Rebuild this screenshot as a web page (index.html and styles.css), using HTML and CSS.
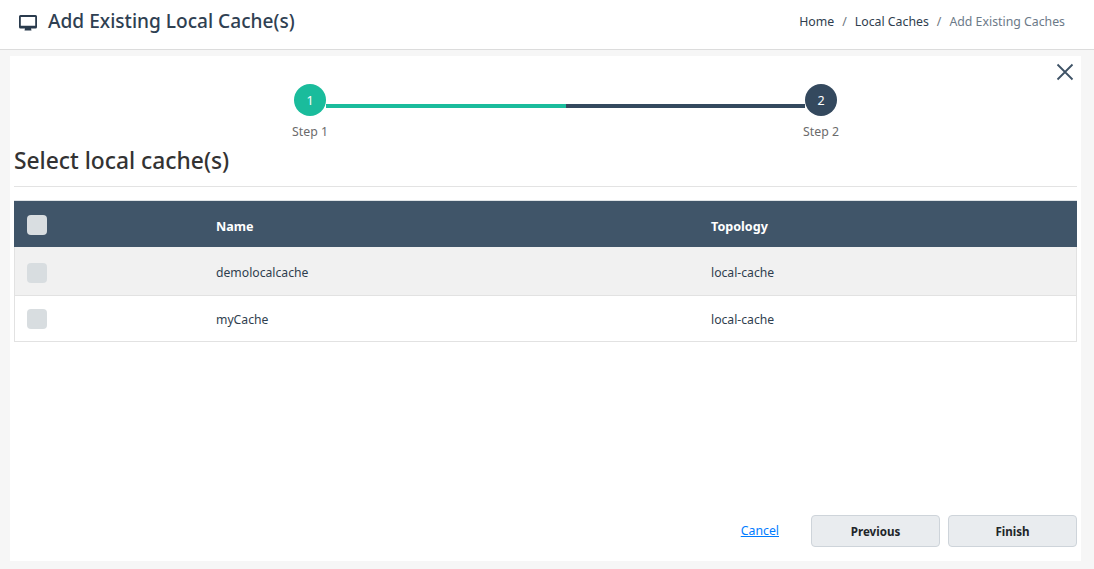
FILE: index.html
```html
<!DOCTYPE html>
<html lang="en">
<head>
<meta charset="utf-8">
<title>Add Existing Local Cache(s)</title>
<link rel="stylesheet" href="styles.css">
</head>
<body>
<header class="topbar">
  <div class="title">
    <svg class="title-icon" viewBox="0 0 18 16" width="18" height="16" aria-hidden="true">
      <path fill="#2a3b4d" fill-rule="evenodd" d="M1.500 0h15a1.500 1.500 0 0 1 1.500 1.500v10.500a1.500 1.500 0 0 1-1.500 1.500h-4.500l.5 2h-7l.5-2h-4.500a1.500 1.500 0 0 1-1.500-1.500v-10.500a1.500 1.500 0 0 1 1.500-1.500zM1.800 2v8.800h14.400v-8.800z"/>
    </svg>
    <h1>Add Existing Local Cache(s)</h1>
  </div>
  <nav class="crumbs">
    <a>Home</a><span class="sep">/</span><a>Local Caches</a><span class="sep">/</span><span class="current">Add Existing Caches</span>
  </nav>
</header>
<main class="card">
  <button class="close" aria-label="Close">
    <svg viewBox="0 0 18 18" width="18" height="18"><path d="M1.500 1.500l15 15M16.500 1.500l-15 15" stroke="#3e5266" stroke-width="1.800" fill="none"/></svg>
  </button>
  <div class="stepper">
    <div class="step">
      <span class="dot dot-done">1</span>
      <span class="step-label">Step 1</span>
    </div>
    <div class="track"><span class="track-done"></span><span class="track-todo"></span></div>
    <div class="step">
      <span class="dot dot-todo">2</span>
      <span class="step-label">Step 2</span>
    </div>
  </div>
  <h2 class="heading">Select local cache(s)</h2>
  <div class="table">
    <div class="row row-head">
      <div class="col-check"><span class="check check-head"></span></div>
      <div class="col-name">Name</div>
      <div class="col-topo">Topology</div>
    </div>
    <div class="row row-odd">
      <div class="col-check"><span class="check"></span></div>
      <div class="col-name">demolocalcache</div>
      <div class="col-topo">local-cache</div>
    </div>
    <div class="row row-even">
      <div class="col-check"><span class="check"></span></div>
      <div class="col-name">myCache</div>
      <div class="col-topo">local-cache</div>
    </div>
  </div>
  <div class="actions">
    <a class="cancel" href="#">Cancel</a>
    <button class="btn">Previous</button>
    <button class="btn">Finish</button>
  </div>
</main>
</body>
</html>
```
FILE: styles.css
```css
* { box-sizing: border-box; }
html, body { height: 100%; }
body {
  margin: 0;
  background: #f6f6f6;
  font-family: "Noto Sans", "Open Sans", sans-serif;
  color: #2f3e4e;
  overflow: hidden;
}
.topbar {
  height: 50px;
  background: #fff;
  border-bottom: 1px solid #dcdcdc;
  display: flex;
  align-items: center;
  justify-content: space-between;
  padding: 0 29px 7px 19px;
}
.title { display: flex; align-items: center; gap: 11px; }
.title-icon { display: block; margin-top: 3px; }
.title h1 {
  margin: 0;
  font-size: 19.100px;
  font-weight: 500;
  line-height: 26px;
  color: #2f4052;
}
.crumbs { font-size: 12.300px; color: #6c7a88; display: flex; align-items: center; }
.crumbs a { color: #2f3e4e; }
.sep { margin: 0 8px; color: #6c757d; }
.card {
  position: relative;
  margin: 6px 13px 8px 10px;
  height: 505px;
  background: #fff;
  padding: 28px 4px 0 4px;
  display: flex;
  flex-direction: column;
}
.close {
  position: absolute;
  top: 7px;
  right: 7px;
  width: 18px;
  height: 18px;
  padding: 0;
  border: 0;
  background: none;
}
.close svg { display: block; }
.stepper { display: flex; align-items: flex-start; padding-left: 280px; padding-right: 240px; height: 59px; }
.step { width: 60px; display: flex; flex-direction: column; align-items: center; flex: none; margin: 0 -14px; position: relative; z-index: 1; }
.dot {
  width: 32px;
  height: 32px;
  border-radius: 50%;
  color: #fff;
  font-size: 12.500px;
  display: flex;
  align-items: center;
  justify-content: center;
}
.dot-done { background: #1abc9c; }
.dot-todo { background: #34495e; }
.step-label { font-size: 12.300px; line-height: 17px; color: #6b6b6b; margin-top: 7px; }
.track { flex: 1; display: flex; height: 4px; margin-top: 20px; }
.track-done { flex: 1; background: #1abc9c; }
.track-todo { flex: 1; background: #34495e; }
.heading {
  margin: 1px 0 13px;
  padding-top: 2px;
  height: 43px;
  border-bottom: 1px solid #e3e3e3;
  font-size: 22.800px;
  font-weight: 500;
  line-height: 30px;
  color: #333;
}
.table { border: 1px solid #e2e2e2; border-top: 0; font-size: 12.200px; }
.row { display: flex; align-items: center; height: 47px; }
.row-head {
  margin: 0 -1px;
  background: #405569;
  color: #fff;
  font-weight: 700;
  font-size: 12.600px;
  border-top: 1px solid #dfe3e6;
}
.row-head .col-name, .row-head .col-topo { padding-top: 4px; }
.row-head .col-name { margin-left: 1px; }
.row-odd { background: #f1f1f1; border-bottom: 1px solid #e2e2e2; height: 49px; }
.row-odd .col-name, .row-odd .col-topo { padding-top: 2px; }
.row-odd .col-check { padding-top: 4px; }
.row-even { background: #fff; height: 45px; }
.row-even .col-name, .row-even .col-topo, .row-even .col-check { padding-top: 1px; }
.col-check { width: 201px; padding-left: 12px; display: flex; }
.col-name { width: 495px; }
.col-topo { flex: 1; }
.row-head .col-check { padding-left: 13px; padding-top: 2px; }
.check { width: 20px; height: 20px; border-radius: 4px; background: #d8dde0; display: block; }
.check-head { background: #d9dee1; }
.actions {
  margin-top: auto;
  padding-bottom: 14px;
  display: flex;
  align-items: center;
  justify-content: flex-end;
  gap: 8px;
}
.cancel { color: #007bff; font-size: 12.300px; text-decoration: underline; margin-right: 24px; margin-top: -2px; }
.btn {
  width: 129px;
  height: 32px;
  background: #e9ecef;
  border: 1px solid #ced4da;
  border-radius: 4px;
  font: 700 11.600px "Noto Sans", sans-serif;
  color: #212529;
  padding: 0;
}
```
